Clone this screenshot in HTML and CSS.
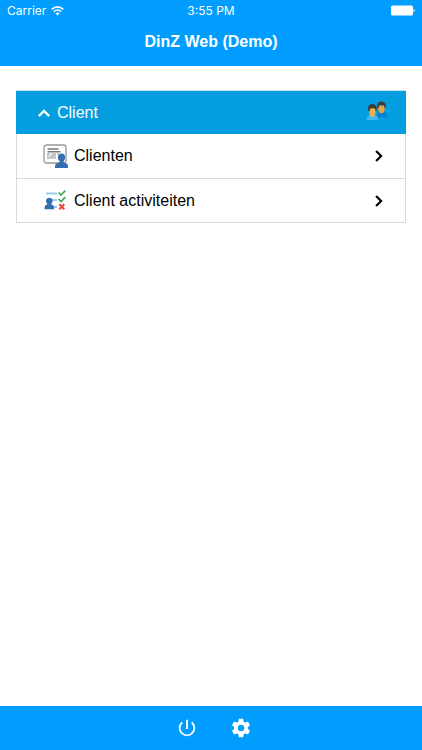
FILE: index.html
```html
<!DOCTYPE html>
<html lang="nl">
<head>
<meta charset="utf-8">
<meta name="viewport" content="width=device-width, initial-scale=1">
<title>DinZ Web (Demo)</title>
<link rel="stylesheet" href="styles.css">
</head>
<body>
<header class="top">
  <div class="status">
    <span class="carrier">Carrier
      <svg width="13" height="10" viewBox="0 0 13 10" fill="none" stroke="currentColor" stroke-width="1.5" aria-hidden="true"><path d="M.7 3.4Q6.5-1.6 12.3 3.4M2.8 5.6Q6.5 2.4 10.2 5.6"/><path d="M4.5 7.3Q6.5 5.8 8.5 7.3L6.5 9.4z" fill="currentColor" stroke="none"/></svg>
    </span>
    <span>3:55 PM</span>
    <svg class="battery" width="25" height="11" viewBox="0 0 25 11" fill="currentColor" aria-hidden="true"><rect x="1" width="22" height="10" y=".5" rx="1.5"/><path d="M23.5 4q1.2.2 1.2 1.5t-1.2 1.5z"/></svg>
  </div>
  <h1 class="title">DinZ Web (Demo)</h1>
</header>
<main class="content">
  <section class="panel">
    <button class="panel-head" type="button" aria-expanded="true">
      <svg width="12" height="8" viewBox="0 0 12 8" fill="none" stroke="currentColor" stroke-width="2.2" aria-hidden="true"><path d="M.8 7.1 6 1.9l5.2 5.2"/></svg>
      <span class="label">Client</span>
      <svg class="people" width="22" height="26" viewBox="0 0 22 26" aria-hidden="true">
        <path d="M11 17v-2q1-3 3-3h4q3 .5 3 5z" fill="#087fd0"/>
        <path d="M12.2 5.5h6.6v3.2q-.5 4.3-3.3 4.5-2.8-.2-3.3-4.5z" fill="#eda33f"/>
        <path d="M11.3 7.2q-.8-5.4 4-5.7 5.3.1 4.3 5.7l-.8 1.4-.8-3-4.5-.5-1 3.2z" fill="#3b3e3b"/>
        <path d="M.8 20q0-4.5 3.4-5h4.6q3.3.5 3.3 5z" fill="#43b7fa"/>
        <path d="M3.2 8h6.5v4q-.5 4.7-3.2 5-2.8-.3-3.3-5z" fill="#f5ae48"/>
        <path d="M2.2 10.3Q1.2 4.5 6.2 4q5.4.3 4.5 6.3l-.9 1.3-.9-3.2-4.5-.2-.9 3.4z" fill="#3f3d34"/>
      </svg>
    </button>
    <nav class="list">
      <a class="row" href="#clienten">
        <svg class="item-icon" width="26" height="26" viewBox="0 0 26 26" aria-hidden="true">
          <rect x="1" y="2" width="22" height="18" rx="2.5" fill="#fff" stroke="#97999b" stroke-width="1.3"/>
          <path d="M4.5 6h11M4.5 8.8h13" stroke="#77797b" stroke-width="1.4"/>
          <path d="M4 11h3m1.5 0H13m1 0h2M4 13h2m1 0h6M4 15h9" stroke="#8b8d8f" stroke-width="1.2"/>
          <path d="M18.5 10.6q3.7.1 3.6 3.8-.1 2.4-1.5 3.6v1.2l3.4 1.5q1 .5 1 4.3H12q0-3.8 1-4.3l3.6-1.5V18q-1.6-1.1-1.7-3.6.1-3.7 3.6-3.8z" fill="#346fad"/>
        </svg>
        <span class="label">Clienten</span>
        <svg class="chevron" width="8" height="12" viewBox="0 0 8 12" fill="none" stroke="currentColor" stroke-width="2.2" aria-hidden="true"><path d="m1.1.9 5 5.1-5 5.1"/></svg>
      </a>
      <a class="row" href="#activiteiten">
        <svg class="item-icon" width="26" height="26" viewBox="0 0 26 26" fill="none" aria-hidden="true">
          <path d="M3 5.5h11M9 12h5M10 19h4" stroke="#9ecbf1" stroke-width="2"/>
          <path d="m15.5 4.5 2.5 2.6 4.3-4.4M15.5 11l2.5 2.6 4.3-4.4" stroke="#43a65a" stroke-width="1.7"/>
          <path d="m16.3 16.3 5 5m0-5-5 5" stroke="#e84a43" stroke-width="2.1"/>
          <path d="M6.3 9.7q3.3.1 3.3 3.4 0 1.7-1.2 2.6v.7l1.8.8q.9.6.9 4.1H1.5q0-3.5.9-4.1l1.8-.8v-.7Q3 14.8 3 13.1q0-3.3 3.3-3.4z" fill="#346fad"/>
        </svg>
        <span class="label">Client activiteiten</span>
        <svg class="chevron" width="8" height="12" viewBox="0 0 8 12" fill="none" stroke="currentColor" stroke-width="2.2" aria-hidden="true"><path d="m1.1.9 5 5.1-5 5.1"/></svg>
      </a>
    </nav>
  </section>
</main>
<footer class="toolbar">
  <button class="tool" type="button" aria-label="Afmelden">
    <svg width="22" height="22" viewBox="0 0 24 24" fill="currentColor" aria-hidden="true"><path d="M13 3h-2v10h2V3zm4.83 2.17-1.42 1.42A6.92 6.92 0 0 1 19 12a7 7 0 1 1-11.42-5.42L6.17 5.17A8.93 8.93 0 0 0 3 12a9 9 0 0 0 18 0c0-2.74-1.23-5.18-3.17-6.83z"/></svg>
  </button>
  <button class="tool" type="button" aria-label="Instellingen">
    <svg width="22" height="22" viewBox="0 0 24 24" fill="currentColor" aria-hidden="true"><path d="M19.43 12.98c.04-.32.07-.64.07-.98s-.03-.66-.07-.98l2.11-1.65c.19-.15.24-.42.12-.64l-2-3.46c-.12-.22-.39-.3-.61-.22l-2.49 1c-.52-.4-1.08-.73-1.69-.98l-.38-2.65A.488.488 0 0 0 14 2h-4c-.25 0-.46.18-.49.42l-.38 2.65c-.61.25-1.17.59-1.69.98l-2.49-1c-.23-.09-.49 0-.61.22l-2 3.46c-.13.22-.07.49.12.64l2.11 1.65c-.04.32-.07.65-.07.98s.03.66.07.98l-2.11 1.65c-.19.15-.24.42-.12.64l2 3.46c.12.22.39.3.61.22l2.49-1c.52.4 1.08.73 1.69.98l.38 2.65c.03.24.24.42.49.42h4c.25 0 .46-.18.49-.42l.38-2.65c.61-.25 1.17-.59 1.69-.98l2.49 1c.23.09.49 0 .61-.22l2-3.46c.12-.22.07-.49-.12-.64l-2.11-1.65zM12 15.5a3.5 3.5 0 1 1 0-7 3.5 3.5 0 0 1 0 7z"/></svg>
  </button>
</footer>
</body>
</html>
```
FILE: styles.css
```css
* {
  box-sizing: border-box;
}

body {
  margin: 0;
  min-height: 100vh;
  display: flex;
  flex-direction: column;
  background: #fff;
  color: #000;
  font-family: "Liberation Sans", Arial, sans-serif;
  font-size: 16px;
}

svg {
  display: block;
  flex: none;
}

button {
  border: 0;
  font: inherit;
  color: inherit;
}

.top {
  height: 66px;
  background: #009dff;
  color: #fff;
}

.status {
  display: grid;
  grid-template-columns: 1fr auto 1fr;
  align-items: center;
  height: 21px;
  padding: 0 7px;
  font-family: Inter, sans-serif;
  font-size: 12px;
}

.carrier {
  display: flex;
  align-items: center;
  gap: 5px;
}

.battery {
  justify-self: end;
}

.title {
  margin: 0;
  font-size: 16px;
  line-height: 42px;
  text-align: center;
}

.content {
  flex: 1;
  padding: 24px 16px;
}

.panel-head,
.row {
  display: flex;
  align-items: center;
  width: 100%;
  height: 44px;
}

.panel-head {
  gap: 7px;
  padding: 0 18px 0 22px;
  border-top: 1px solid #c9dfea;
  background: #039de0;
  color: #fff;
  text-align: left;
}

.label {
  flex: 1;
}

.list {
  border: solid #d9d9d9;
  border-width: 0 1px 1px;
}

.row {
  gap: 5px;
  padding: 0 22px 0 26px;
  color: inherit;
  text-decoration: none;
}

.row + .row {
  border-top: 1px solid #d9d9d9;
}

.toolbar {
  display: flex;
  justify-content: center;
  gap: 32px;
  height: 44px;
  padding-left: 6px;
  background: #009dff;
  color: #fff;
}

.tool {
  display: flex;
  align-items: center;
  padding: 0;
  background: none;
}
```
